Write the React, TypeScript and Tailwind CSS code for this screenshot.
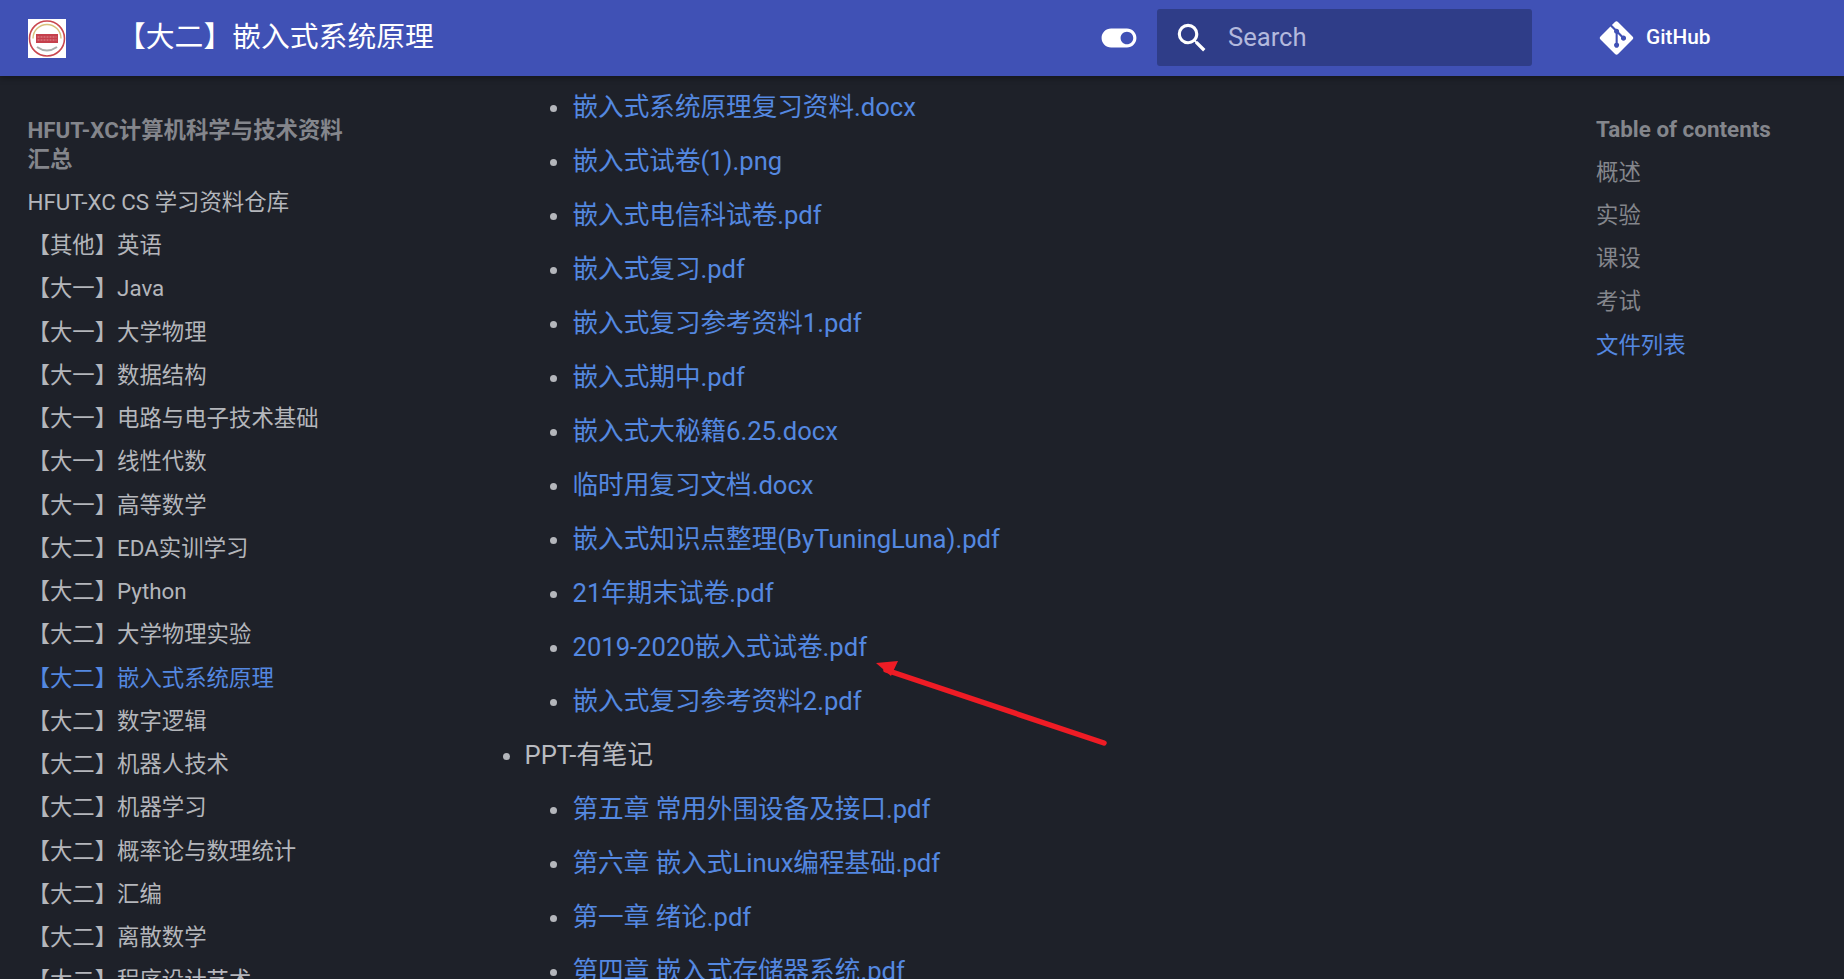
import { FaGitAlt } from "react-icons/fa";

const navItems = [
  "HFUT-XC CS 学习资料仓库",
  "【其他】英语",
  "【大一】Java",
  "【大一】大学物理",
  "【大一】数据结构",
  "【大一】电路与电子技术基础",
  "【大一】线性代数",
  "【大一】高等数学",
  "【大二】EDA实训学习",
  "【大二】Python",
  "【大二】大学物理实验",
  "【大二】嵌入式系统原理",
  "【大二】数字逻辑",
  "【大二】机器人技术",
  "【大二】机器学习",
  "【大二】概率论与数理统计",
  "【大二】汇编",
  "【大二】离散数学",
  "【大二】程序设计艺术",
];

const reviewFiles = [
  "嵌入式系统原理复习资料.docx",
  "嵌入式试卷(1).png",
  "嵌入式电信科试卷.pdf",
  "嵌入式复习.pdf",
  "嵌入式复习参考资料1.pdf",
  "嵌入式期中.pdf",
  "嵌入式大秘籍6.25.docx",
  "临时用复习文档.docx",
  "嵌入式知识点整理(ByTuningLuna).pdf",
  "21年期末试卷.pdf",
  "2019-2020嵌入式试卷.pdf",
  "嵌入式复习参考资料2.pdf",
];

const pptFiles = [
  "第五章 常用外围设备及接口.pdf",
  "第六章 嵌入式Linux编程基础.pdf",
  "第一章 绪论.pdf",
  "第四章 嵌入式存储器系统.pdf",
];

const tocItems = ["概述", "实验", "课设", "考试", "文件列表"];

function FileList({ files }: { files: string[] }) {
  return (
    <ul className="pl-[48px]">
      {files.map((f) => (
        <li key={f} className="h-[54px] flex items-center relative">
          <span className="absolute left-[-23px] top-[24px] w-[7px] h-[7px] rounded-full bg-[#b4b6bb]" />
          <a className="text-[#5488e0]">{f}</a>
        </li>
      ))}
    </ul>
  );
}

function Logo() {
  return (
    <svg width="38" height="39" viewBox="0 0 38 39" className="shrink-0 bg-white">
      <circle cx="19" cy="19.5" r="17.5" fill="#fff" stroke="#c9474f" strokeWidth="1.6" />
      <path d="M5 19.5a14 14 0 0 1 28 0" fill="none" stroke="#d9c27c" strokeWidth="1.4" />
      <rect x="8" y="15" width="22" height="9" fill="#c5404c" />
      <path d="M9.5 18h19M9.5 21h19" stroke="#e8a5aa" strokeWidth="0.8" strokeDasharray="2 1" />
      <path d="M9 28q10 7 20 0" fill="none" stroke="#a9adac" strokeWidth="2" />
    </svg>
  );
}

export default function App() {
  return (
    <div className="h-screen overflow-hidden bg-[#1e2129] relative font-['Roboto','Noto_Sans_CJK_SC',sans-serif]">
      {/* Header */}
      <header className="h-[76px] bg-[#4051b5] flex items-center pl-[28px] shadow-[0_2px_6px_rgba(0,0,0,0.35)] relative z-10">
        <Logo />
        <div className="ml-[51px] w-[996px] text-[28.8px] text-white">【大二】嵌入式系统原理</div>
        <svg width="38" height="38" viewBox="0 0 24 24" fill="#fff" className="ml-[-13px] shrink-0">
          <path d="M17 6H7c-3.31 0-6 2.69-6 6s2.69 6 6 6h10c3.31 0 6-2.69 6-6s-2.69-6-6-6zm0 10c-2.21 0-4-1.79-4-4s1.79-4 4-4 4 1.79 4 4-1.79 4-4 4z" />
        </svg>
        <div className="ml-[19px] mt-[-1px] w-[375px] h-[57px] rounded-[3px] bg-[#2f3d88] flex items-center pl-[16px] shrink-0">
          <svg width="38" height="38" viewBox="0 0 24 24" fill="#fff">
            <path d="M9.5 3A6.5 6.5 0 0 1 16 9.5c0 1.61-.59 3.09-1.56 4.23l.27.27h.79l5 5-1.5 1.5-5-5v-.79l-.27-.27A6.516 6.516 0 0 1 9.5 16 6.5 6.5 0 0 1 3 9.5 6.5 6.5 0 0 1 9.5 3m0 2C7 5 5 7 5 9.5S7 14 9.5 14 14 12 14 9.5 12 5 9.5 5z" />
          </svg>
          <span className="ml-[17px] text-[25.6px] text-[#b3b9dd]">Search</span>
        </div>
        <div className="ml-[67px] flex items-center text-white shrink-0">
          <FaGitAlt className="w-[35px] h-[38px]" />
          <span className="ml-[12px] text-[20.8px] font-medium">GitHub</span>
        </div>
      </header>

      <div className="flex">
        {/* Left nav */}
        <nav className="w-[480px] shrink-0 pl-[27.5px] pt-[40px] text-[22.4px]">
          <div className="w-[330px] mb-[7px] font-bold text-[#84868c] leading-[29px]">HFUT-XC计算机科学与技术资料汇总</div>
          <ul>
            {navItems.map((item) => (
              <li
                key={item}
                className={item === "【大二】嵌入式系统原理" ? "h-[43.25px] flex items-center text-[#5488e0]" : "h-[43.25px] flex items-center text-[#b4b6bb]"}
              >
                {item}
              </li>
            ))}
          </ul>
        </nav>

        {/* Main content */}
        <main className="w-[1116px] shrink-0 pl-[44.5px] pt-[4.5px] text-[25.6px] text-[#b9bbc0]">
          <FileList files={reviewFiles} />
          <div className="h-[54px] flex items-center relative">
            <span className="absolute left-[-22px] top-[24px] w-[7px] h-[7px] rounded-full bg-[#b4b6bb]" />
            PPT-有笔记
          </div>
          <FileList files={pptFiles} />
        </main>

        {/* Table of contents */}
        <aside className="pt-[39px] text-[22.4px]">
          <div className="font-bold text-[#84868c] leading-[29px] mb-[7px]">Table of contents</div>
          <ul>
            {tocItems.map((t) => (
              <li key={t} className={t === "文件列表" ? "h-[43.2px] flex items-center text-[#5488e0]" : "h-[43.2px] flex items-center text-[#84868c]"}>
                {t}
              </li>
            ))}
          </ul>
        </aside>
      </div>

      {/* Red annotation arrow */}
      <svg className="absolute left-[860px] top-[650px]" width="260" height="110" viewBox="0 0 260 110">
        <path d="M244 93 26 20" stroke="#ee1c25" strokeWidth="5.5" strokeLinecap="round" fill="none" />
        <path d="M16 13 38 11 31 26Z" fill="#ee1c25" />
      </svg>
    </div>
  );
}
